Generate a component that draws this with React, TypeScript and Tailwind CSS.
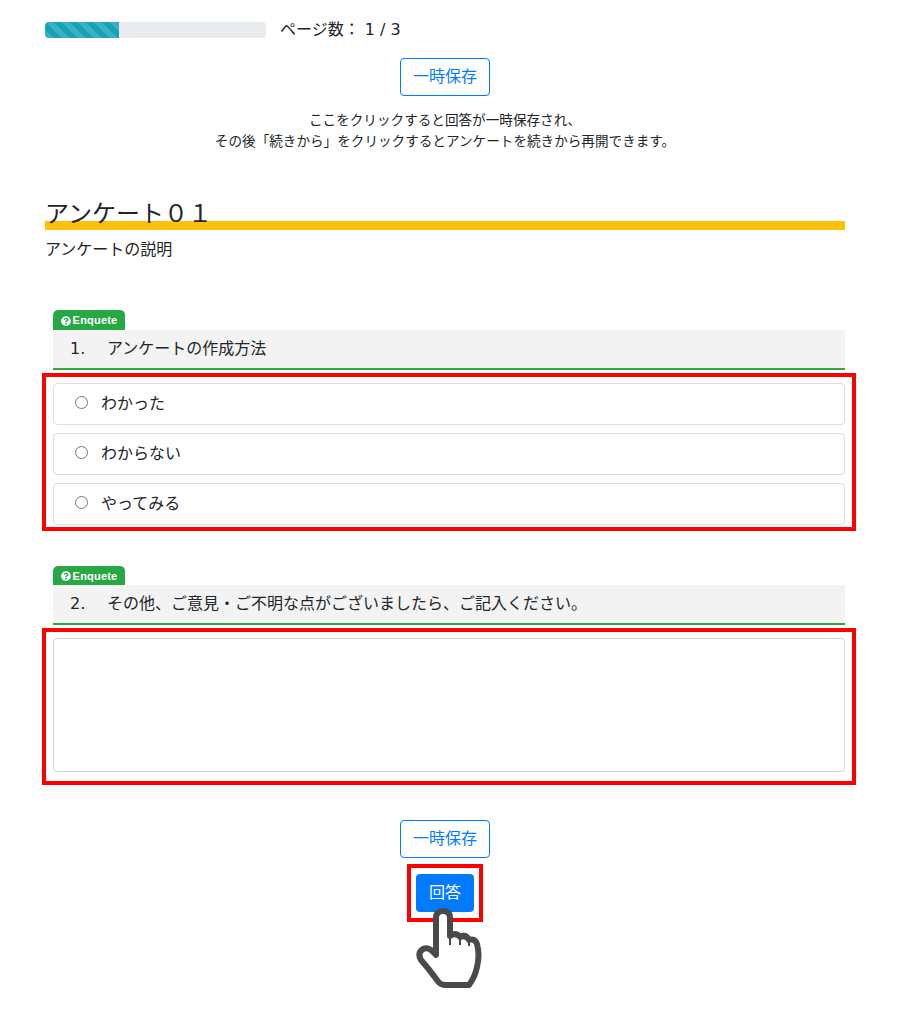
import React from "react";
import { FaQuestionCircle } from "react-icons/fa";

const font = "font-['DejaVu_Sans','Noto_Sans_CJK_JP',sans-serif]";

const SaveButton: React.FC = () => (
  <button className="w-[90px] h-[38px] border border-[#007bff] rounded text-[#007bff] text-base bg-white">
    一時保存
  </button>
);

const QuestionHead: React.FC<{ num: string; title: string; badgeClass: string }> = ({ num, title, badgeClass }) => (
  <div className="ml-2">
    <div className={`w-[72px] pt-px bg-[#28a745] rounded-t-[5px] flex items-center justify-center gap-[2px] text-white text-[11px] font-bold tracking-[0.2px] font-['Liberation_Sans',sans-serif] ${badgeClass}`}>
      <FaQuestionCircle className="w-[10px] h-[10px]" />
      <span>Enquete</span>
    </div>
    <div className="h-10 bg-[#f3f3f3] border-b-2 border-[#28a745] flex items-center pl-[17px] text-base">
      <span className="w-[37px]">{num}</span>
      <span>{title}</span>
    </div>
  </div>
);

const RedBox: React.FC<{ children: React.ReactNode; className: string }> = ({ children, className }) => (
  <div className={`border-4 border-[#ff0000] -ml-[3px] -mr-[11px] pl-[7px] pr-[7px] ${className}`}>{children}</div>
);

const Option: React.FC<{ label: string }> = ({ label }) => (
  <label className="h-[42px] border border-[#dddddd] rounded flex items-center pl-[21px] gap-[13px] text-base">
    <input type="radio" name="q1" className="w-[13px] h-[13px] m-0 mb-[3px]" />
    <span>{label}</span>
  </label>
);

export default function App() {
  return (
    <div className={`${font} relative w-[900px] h-[1025px] bg-white text-[#212529] pl-[45px] pr-[55px] pt-[22px] overflow-hidden`}>
      <div className="flex items-center h-4">
        <div className="w-[221px] h-4 bg-[#e9ecef] rounded overflow-hidden">
          <div className="w-[74px] h-4 bg-[#17a2b8] bg-[linear-gradient(45deg,rgba(255,255,255,.15)_25%,transparent_25%,transparent_50%,rgba(255,255,255,.15)_50%,rgba(255,255,255,.15)_75%,transparent_75%,transparent)] bg-[length:16px_16px]" />
        </div>
        <span className="ml-[14px] text-base">ページ数： 1 / 3</span>
      </div>

      <div className="mt-5 flex justify-center">
        <SaveButton />
      </div>
      <p className="mt-[14px] text-center text-[13.6px] leading-[21px]">
        ここをクリックすると回答が一時保存され、
        <br />
        その後「続きから」をクリックするとアンケートを続きから再開できます。
      </p>

      <h2 className="mt-[39px] h-[39px] border-b-[9px] border-[#ffc107] text-2xl leading-[46px] whitespace-nowrap">
        アンケート０１
      </h2>
      <p className="mt-2 text-base leading-6">アンケートの説明</p>

      <div className="mt-12">
        <QuestionHead num="1." title="アンケートの作成方法" badgeClass="h-5" />
        <RedBox className="mt-[3px] h-[158px] pt-[6px]">
          <div className="flex flex-col gap-2">
            <Option label="わかった" />
            <Option label="わからない" />
            <Option label="やってみる" />
          </div>
        </RedBox>
      </div>

      <div className="mt-[35px]">
        <QuestionHead num="2." title="その他、ご意見・ご不明な点がございましたら、ご記入ください。" badgeClass="h-[19px]" />
        <RedBox className="mt-[3px] h-[157px] pt-[6px]">
          <textarea className="block w-[792px] h-[134px] border border-[#ced4da] rounded resize-none" />
        </RedBox>
      </div>

      <div className="mt-[35px] flex flex-col items-center">
        <SaveButton />
        <div className="mt-[6px] w-[76px] h-[58px] border-4 border-[#ff0000] flex items-center justify-center">
          <button className="w-[58px] h-[38px] bg-[#007bff] rounded text-white text-base">回答</button>
        </div>
      </div>

      {/* hand cursor over the answer button */}
      <svg className="absolute left-[415px] top-[905px]" width="70" height="86" viewBox="0 0 70 86">
        <path
          d="M21 46 V13 Q21 6 28 6 Q35 6 35 13 V31 Q41 27 45 32 Q51 29 54 35 Q60 33 62 39 Q65 50 62 62 Q60 72 54 80 H30 Q25 80 22 75 Q14 64 6 55 Q2 48 8 44 Q14 41 21 50 Z"
          fill="#ffffff"
          stroke="#4a4a4a"
          strokeWidth="6"
          strokeLinejoin="round"
        />
        <path d="M35 31 V40 M45 32 V40 M54 35 V41" stroke="#4a4a4a" strokeWidth="2" fill="none" />
      </svg>
    </div>
  );
}
